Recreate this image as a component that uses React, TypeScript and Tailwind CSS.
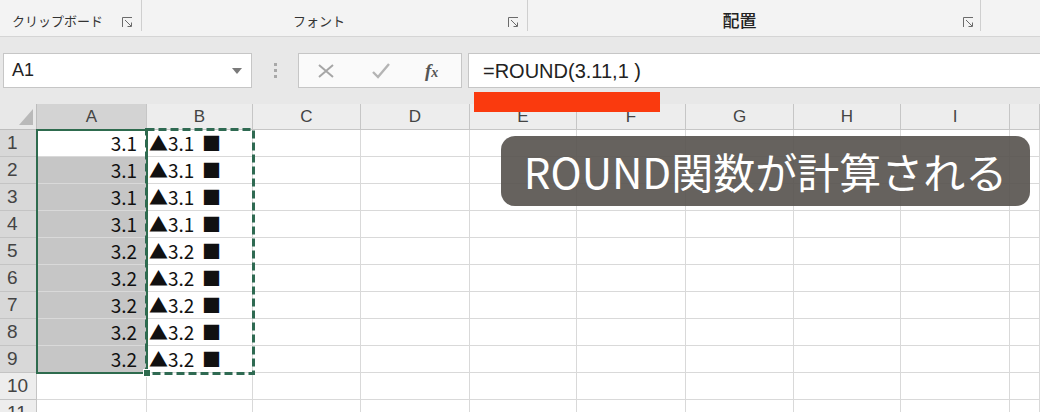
import React from "react";

const rows = [
  { n: 1, v: "3.1" },
  { n: 2, v: "3.1" },
  { n: 3, v: "3.1" },
  { n: 4, v: "3.1" },
  { n: 5, v: "3.2" },
  { n: 6, v: "3.2" },
  { n: 7, v: "3.2" },
  { n: 8, v: "3.2" },
  { n: 9, v: "3.2" },
  { n: 10, v: "" },
  { n: 11, v: "" },
];

const cols = ["A", "B", "C", "D", "E", "F", "G", "H", "I", ""];

function Launcher() {
  return (
    <svg width="11" height="11" viewBox="0 0 11 11" fill="none" stroke="#6b6b6b" strokeWidth="1">
      <path d="M10 0.5H0.5V10" />
      <path d="M3 3L9 9" />
      <path d="M5.5 9.5H9.5V5.5" />
    </svg>
  );
}

function Ribbon() {
  return (
    <div className="flex h-[37px] border-b border-[#d5d5d5] bg-[#f3f3f3] text-[13px] text-[#333]">
      <div className="flex w-[142px] items-end border-r border-[#cfcfcf] pb-[4px] mb-[5px]">
        <span className="ml-[12px] leading-none">クリップボード</span>
        <span className="ml-auto mr-[8px] mb-[-1px]">
          <Launcher />
        </span>
      </div>
      <div className="flex w-[386px] items-end border-r border-[#cfcfcf] pb-[4px] mb-[5px]">
        <span className="flex-1 pr-[4px] text-center leading-none">フォント</span>
        <span className="w-[27px] mb-[-1px] pl-[8px]">
          <Launcher />
        </span>
      </div>
      <div className="flex w-[453px] items-end border-r border-[#cfcfcf] pb-[3px] mb-[5px]">
        <span className="flex-1 pr-[4px] text-center text-[17px] font-medium leading-none text-[#222]">配置</span>
        <span className="w-[25px] mb-[0px] pl-[8px]">
          <Launcher />
        </span>
      </div>
    </div>
  );
}

function FormulaBar() {
  return (
    <div className="flex h-[67px] items-start bg-[#e8e8e8] pt-[16px]">
      <div className="ml-[3px] flex h-[35px] w-[249px] items-center border border-[#c6c6c6] bg-white pl-[8px] pr-[9px]">
        <span className="font-['Liberation_Sans',sans-serif] text-[18px] text-[#222]">A1</span>
        <svg className="ml-auto" width="10" height="6" viewBox="0 0 10 6">
          <path d="M0 0H10L5 6Z" fill="#7a7a7a" />
        </svg>
      </div>
      <div className="flex h-[35px] w-[46px] flex-col items-center justify-center gap-[3px]">
        <span className="h-[3px] w-[3px] bg-[#a8a8a8]" />
        <span className="h-[3px] w-[3px] bg-[#a8a8a8]" />
        <span className="h-[3px] w-[3px] bg-[#a8a8a8]" />
      </div>
      <div className="flex h-[35px] w-[164px] items-center border border-[#c6c6c6] bg-[#fafafa]">
        <svg className="ml-[19px]" width="16" height="14" viewBox="0 0 16 14" stroke="#a6a6a6" strokeWidth="2">
          <path d="M1 1L15 13M15 1L1 13" />
        </svg>
        <svg className="ml-[38px]" width="18" height="16" viewBox="0 0 18 16" fill="none" stroke="#b4b4b4" strokeWidth="2.4">
          <path d="M1 9L6 14L17 1" />
        </svg>
        <span className="ml-[35px] font-['Liberation_Serif',serif] text-[19px] font-bold italic leading-none text-[#555]">
          f<span className="text-[14px]">x</span>
        </span>
      </div>
      <div className="ml-[6px] flex h-[35px] flex-1 items-center border-y border-l border-[#c6c6c6] bg-white pl-[14px]">
        <span className="font-['Liberation_Sans',sans-serif] text-[20px] text-[#222]">=ROUND(3.11,1 )</span>
      </div>
    </div>
  );
}

function Sheet() {
  return (
    <div className="relative">
      <div className="grid grid-cols-[37px_110px_106px_108px_109px_107px_109px_108px_107px_109px_30px] font-['Noto_Sans_CJK_JP',sans-serif]">
        <div className="relative h-[26px] border-r border-b border-[#bdbdbd] bg-[#e8e8e8]">
          <svg className="absolute right-[3px] bottom-[4px]" width="14" height="16" viewBox="0 0 14 16">
            <path d="M14 0V16H0Z" fill="#b9b9b9" />
          </svg>
        </div>
        {cols.map((c, i) => (
          <div
            key={"h" + i}
            className={
              "flex h-[26px] items-center justify-center border-r border-b border-[#c6c6c6] font-['Liberation_Sans',sans-serif] text-[17px] text-[#444] " +
              (c === "A" ? "bg-[#d3d3d3]" : "bg-[#ededed]")
            }
          >
            {c}
          </div>
        ))}
        {rows.map((r) => (
          <React.Fragment key={r.n}>
            <div
              className={
                "flex h-[27px] items-center border-r border-b border-[#c4c4c4] pl-[7px] font-['Liberation_Sans',sans-serif] text-[19px] text-[#444] " +
                (r.n <= 9 ? "bg-[#d8d8d8]" : "bg-[#ededed]")
              }
            >
              {r.n}
            </div>
            <div
              className={
                "flex h-[27px] items-center justify-end border-r border-b border-[#d9d9d9] pr-[9px] text-[19px] text-[#111] " +
                (r.n >= 2 && r.n <= 9 ? "bg-[#c6c6c6]" : "bg-white")
              }
            >
              {r.v}
            </div>
            <div className="flex h-[27px] items-center border-r border-b border-[#d9d9d9] bg-white pl-[2px] text-[19px] text-[#111]">
              {r.v ? (
                <>
                  <span>▲</span>
                  <span className="w-[34px]">{r.v}</span>
                  <span>■</span>
                </>
              ) : null}
            </div>
            {cols.slice(2).map((c, i) => (
              <div key={i} className="h-[27px] border-r border-b border-[#d9d9d9] bg-white" />
            ))}
          </React.Fragment>
        ))}
      </div>
      <svg className="absolute left-[145px] top-[24px]" width="110" height="247" viewBox="0 0 110 247" fill="none">
        <rect x="1.5" y="1.5" width="107" height="244" stroke="#2f6a52" strokeWidth="3" strokeDasharray="8 4" />
      </svg>
      <div className="absolute left-[36px] top-[25px] h-[245px] w-[112px] border-2 border-[#2e6b4e]" />
      <div className="absolute left-[143px] top-[265px] h-[8px] w-[8px] border border-white bg-[#2e6b4e]" />
    </div>
  );
}

export default function App() {
  return (
    <div className="relative h-[412px] w-[1040px] overflow-hidden bg-white font-['Noto_Sans_CJK_JP',sans-serif]">
      <Ribbon />
      <FormulaBar />
      <Sheet />
      <div className="absolute left-[474px] top-[92px] h-[20px] w-[186px] bg-[#fa3a0e]" />
      <div className="absolute left-[501px] top-[136px] flex h-[70px] w-[529px] items-center justify-center rounded-[14px] bg-[#55514d]/90">
        <span className="font-['Noto_Sans_CJK_JP',sans-serif] text-[42px] font-normal leading-none text-white">
          ROUND関数が計算される
        </span>
      </div>
    </div>
  );
}
